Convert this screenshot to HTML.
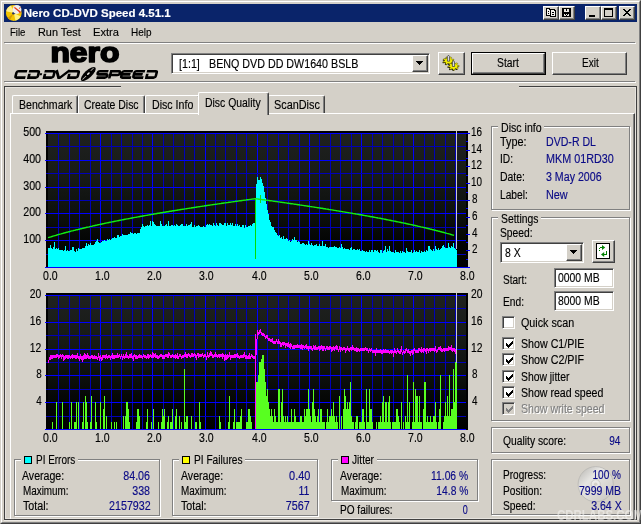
<!DOCTYPE html>
<html><head><meta charset="utf-8"><title>Nero CD-DVD Speed 4.51.1</title>
<style>
html,body{margin:0;padding:0;background:#d4d0c8;}
body{width:641px;height:524px;position:relative;overflow:hidden;font-family:"Liberation Sans",sans-serif;font-size:12px;}
.abs{position:absolute;}
.t{position:absolute;white-space:pre;display:block;-webkit-text-stroke:0.15px currentColor;}
.win{position:absolute;left:0;top:0;width:641px;height:524px;box-sizing:border-box;background:#d4d0c8;
 border-top:1px solid #d4d0c8;border-left:1px solid #d4d0c8;border-right:1px solid #404040;border-bottom:1px solid #404040;}
.win2{position:absolute;left:1px;top:1px;width:637px;height:520px;box-sizing:content-box;border-top:1px solid #fff;border-left:1px solid #fff;border-right:1px solid #808080;border-bottom:1px solid #808080;}
.title{position:absolute;left:4px;top:4px;width:633px;height:18px;background:#0a246a;}
.tbtn{position:absolute;top:6px;width:16px;height:14px;box-sizing:border-box;background:#d4d0c8;border:1px solid;border-color:#fff #404040 #404040 #fff;box-shadow:inset -1px -1px 0 #808080;}
.sep{position:absolute;height:1px;background:#808080;box-shadow:1px 1px 0 #fff;}
.frame{position:absolute;left:4px;top:86px;width:631px;height:432px;border:1px solid #404040;box-shadow:inset 1px 1px 0 #e6e3de, inset -1px -1px 0 #e6e3de, 0 1px 0 #ece9e4;}
.gb{position:absolute;border:1px solid #808080;box-shadow:inset 1px 1px 0 #fff, 1px 1px 0 #fff;}
.sunk{position:absolute;box-sizing:border-box;background:#fff;border:1px solid;border-color:#808080 #fff #fff #808080;box-shadow:inset 1px 1px 0 #404040, inset -1px -1px 0 #d4d0c8;}
.btn{position:absolute;box-sizing:border-box;background:#d4d0c8;border:1px solid;border-color:#fff #404040 #404040 #fff;box-shadow:inset -1px -1px 0 #808080, inset 1px 1px 0 #d4d0c8;}
.cb{position:absolute;width:13px;height:13px;box-sizing:border-box;border:1px solid;border-color:#808080 #fff #fff #808080;box-shadow:inset 1px 1px 0 #404040, inset -1px -1px 0 #d4d0c8;padding:0;}
.cb svg{left:3px !important;top:3px !important;}
.tab{position:absolute;box-sizing:border-box;background:#d4d0c8;border-top:1px solid #fff;border-left:1px solid #fff;border-right:1px solid #404040;border-radius:2px 2px 0 0;box-shadow:inset -1px 0 0 #808080;}
.panel{position:absolute;left:10px;top:113px;width:623px;height:405px;border-top:1px solid #fff;border-left:1px solid #fff;border-right:1px solid #404040;box-shadow:inset -1px 0 0 #808080;box-sizing:content-box;}
.sq{position:absolute;width:6px;height:6px;border:1px solid #000;top:456px;}
</style></head><body>
<div class="win"></div><div class="win2"></div>
<div class="title" id="titlebar"></div>
<!-- app icon -->
<svg class="abs" style="left:4px;top:4px" width="20" height="18" viewBox="0 0 20 18">
<circle cx="9.8" cy="9" r="7.9" fill="#f4c400"/>
<path d="M9.8,9 L2.1,7.2 A7.9,7.9 0 0 1 7,1.600 Z" fill="#fff08c"/>
<path d="M9.8,9 L11.500,16.700 A7.9,7.9 0 0 0 16.800,12.600 Z" fill="#fff27e"/>
<path d="M9.8,9 L3.600,13.900 A7.9,7.9 0 0 0 6,15.900 Z" fill="#d89c00"/>
<circle cx="9.5" cy="9.2" r="1.300" fill="#20306a"/>
<circle cx="12.900" cy="5.4" r="4.500" fill="#f0f0f0"/>
<path d="M10.800,3.800 L16.500,8.300" stroke="#e83818" stroke-width="1.300"/>
<path d="M14.500,6 L16.800,8.600 L15,8.800Z" fill="#e83818"/>
<circle cx="10.300" cy="3.300" r="0.600" fill="#f06030"/>
<circle cx="15.500" cy="4.200" r="0.600" fill="#f06030"/>
<circle cx="16.300" cy="3.200" r="0.500" fill="#f06030"/>
</svg>
<!-- title buttons -->
<div class="tbtn" style="left:543px"></div>
<div class="tbtn" style="left:559px"></div>
<div class="tbtn" style="left:585px"></div>
<div class="tbtn" style="left:601px"></div>
<div class="tbtn" style="left:619px"></div>
<svg class="abs" style="left:543px;top:6px" width="94" height="14" viewBox="543 6 94 14" shape-rendering="crispEdges">
<!-- copy -->
<path d="M546,8h3l2,2v6h-5z" fill="#000"/><path d="M547,9h2v1h1v5h-3z" fill="#f4f2ee"/><rect x="548" y="11" width="1" height="1" fill="#000"/><rect x="548" y="13" width="1" height="1" fill="#000"/>
<path d="M550,9h4l2,2v6h-6z" fill="#000"/><path d="M551,10h3v1h1v5h-4z" fill="#f4f2ee"/><rect x="552" y="12" width="2" height="1" fill="#000"/><rect x="552" y="14" width="2" height="1" fill="#000"/>
<!-- save -->
<rect x="562" y="8" width="9" height="9" fill="#000"/><rect x="564" y="9" width="5" height="3" fill="#e8e6e0"/><rect x="566" y="9" width="1" height="2" fill="#000"/><rect x="564" y="14" width="5" height="2" fill="#e8e6e0"/><rect x="566" y="15" width="1" height="1" fill="#000"/><rect x="565" y="14" width="1" height="1" fill="#000"/><rect x="567" y="14" width="1" height="1" fill="#000"/>
<!-- min -->
<rect x="589" y="15" width="6" height="2" fill="#000"/>
<!-- max -->
<path d="M604,8h9v9h-9zM605,10v6h7v-6z" fill="#000" fill-rule="evenodd"/>
<!-- close -->
<path d="M623,9h2v1h1v1h2v-1h1v-1h2v1h-1v1h-1v1h-1v1h1v1h1v1h1v1h-2v-1h-1v-1h-2v1h-1v1h-2v-1h1v-1h1v-1h1v-1h-1v-1h-1v-1h-1z" fill="#000"/>
</svg>
<!-- separators -->
<div class="sep" style="left:4px;top:42px;width:631px"></div>
<div class="sep" style="left:4px;top:81px;width:631px"></div>
<!-- nero logo -->
<svg class="abs" style="left:10px;top:44px;will-change:transform" width="155" height="40" viewBox="10 44 155 40">
<text x="50.4" y="62.3" font-family="Liberation Sans, sans-serif" font-weight="bold" font-size="28" textLength="69" lengthAdjust="spacingAndGlyphs" fill="#000" stroke="#000" stroke-width="1.7" stroke-linejoin="round">nero</text>
<g transform="translate(0,78.6) skewX(-15)">
<path d="M25.10,-7.4H16.50Q14.90,-7.4 14.90,-5.800000000000001V-2.6Q14.90,-1.0 16.50,-1.0H25.10M27.00,-7.4H35.60Q37.20,-7.4 37.20,-5.800000000000001V-2.6Q37.20,-1.0 35.60,-1.0H27.00M28.20,-4.8V-1.0M42.60,-7.4H51.20Q52.80,-7.4 52.80,-5.800000000000001V-2.6Q52.80,-1.0 51.20,-1.0H42.60M43.80,-4.8V-1.0M54.30,-8.4L58.30,-1.0H59.70L67.50,-8.4M66.90,-7.4H75.50Q77.10,-7.4 77.10,-5.800000000000001V-2.6Q77.10,-1.0 75.50,-1.0H66.90M68.10,-4.8V-1.0M106.40,-7.4H97.80Q96.20,-7.4 96.20,-5.80Q96.20,-4.2 97.80,-4.2H104.80Q106.40,-4.2 106.40,-2.60Q106.40,-1.0 104.80,-1.0H96.20M109.20,0.0V-7.4H116.80Q118.40,-7.4 118.40,-5.50Q118.40,-3.6 116.80,-3.6H109.20M130.80,-7.4H122.20Q120.60,-7.4 120.60,-5.800000000000001V-2.6Q120.60,-1.0 122.20,-1.0H130.80M120.60,-4.2H129.30M143.00,-7.4H134.40Q132.80,-7.4 132.80,-5.800000000000001V-2.6Q132.80,-1.0 134.40,-1.0H143.00M132.80,-4.2H141.50M144.90,-7.4H153.50Q155.10,-7.4 155.10,-5.800000000000001V-2.6Q155.10,-1.0 153.50,-1.0H144.90M146.10,-4.8V-1.0" fill="none" stroke="#000" stroke-width="2.6" stroke-linejoin="miter"/>
<rect x="38.6" y="-5.3" width="2.2" height="2" fill="#000"/>
</g>
<g transform="translate(88.3,74) rotate(-43)">
<ellipse cx="0" cy="0" rx="9.6" ry="3.7" fill="#000"/>
<rect x="-8" y="-0.35" width="5" height="0.7" fill="#d4d0c8"/>
<rect x="4" y="-1.1" width="4" height="0.7" fill="#d4d0c8"/>
<ellipse cx="0.3" cy="-0.2" rx="1.7" ry="0.8" fill="#f0eee8"/>
</g>
</svg>
<!-- toolbar -->
<div class="sunk" style="left:171px;top:53px;width:259px;height:21px"></div>
<div class="btn" style="left:412px;top:55px;width:16px;height:17px"><svg width="7" height="4" viewBox="0 0 7 4" shape-rendering="crispEdges" style="position:absolute;left:3px;top:5px"><path d="M0,0h7l-3.5,4z" fill="#000"/></svg></div>
<div class="btn" style="left:438px;top:52px;width:27px;height:23px"></div>
<div class="abs" style="left:471px;top:52px;width:75px;height:23px;background:#000"></div>
<div class="btn" style="left:472px;top:53px;width:73px;height:21px"></div>
<div class="btn" style="left:552px;top:52px;width:75px;height:23px"></div>
<!-- gear icon -->
<svg class="abs" style="left:438px;top:52px" width="27" height="23" viewBox="438 52 27 23">
<path d="M452.32,61.36L453.78,62.15L453.14,63.05L451.40,62.68L450.65,63.14L450.91,64.44L449.57,64.76L448.70,63.60L447.73,63.55L446.63,64.60L445.37,64.14L445.89,62.88L445.25,62.35L443.44,62.53L443.00,61.57L444.61,60.94L444.68,60.24L443.22,59.45L443.86,58.55L445.60,58.92L446.35,58.46L446.09,57.16L447.43,56.84L448.30,58.00L449.27,58.05L450.37,57.00L451.63,57.46L451.11,58.72L451.75,59.25L453.56,59.07L454.00,60.03L452.39,60.66Z" fill="#000" transform="translate(-0.6,0.7)"/>
<path d="M452.32,61.36L453.78,62.15L453.14,63.05L451.40,62.68L450.65,63.14L450.91,64.44L449.57,64.76L448.70,63.60L447.73,63.55L446.63,64.60L445.37,64.14L445.89,62.88L445.25,62.35L443.44,62.53L443.00,61.57L444.61,60.94L444.68,60.24L443.22,59.45L443.86,58.55L445.60,58.92L446.35,58.46L446.09,57.16L447.43,56.84L448.30,58.00L449.27,58.05L450.37,57.00L451.63,57.46L451.11,58.72L451.75,59.25L453.56,59.07L454.00,60.03L452.39,60.66Z" fill="#f4f000" stroke="#5a5400" stroke-width="0.5"/>
<path d="M457.11,67.42L458.25,68.45L457.33,69.21L455.76,68.54L454.88,68.85L454.68,70.16L453.28,70.23L452.83,68.95L451.90,68.73L450.48,69.55L449.42,68.88L450.35,67.75L449.92,67.12L448.11,66.98L448.01,65.97L449.78,65.65L450.09,64.98L448.95,63.95L449.87,63.19L451.44,63.86L452.32,63.55L452.52,62.24L453.92,62.17L454.37,63.45L455.30,63.67L456.72,62.85L457.78,63.52L456.85,64.65L457.28,65.28L459.09,65.42L459.19,66.43L457.42,66.75Z" fill="#000" transform="translate(-0.6,0.7)"/>
<path d="M457.11,67.42L458.25,68.45L457.33,69.21L455.76,68.54L454.88,68.85L454.68,70.16L453.28,70.23L452.83,68.95L451.90,68.73L450.48,69.55L449.42,68.88L450.35,67.75L449.92,67.12L448.11,66.98L448.01,65.97L449.78,65.65L450.09,64.98L448.95,63.95L449.87,63.19L451.44,63.86L452.32,63.55L452.52,62.24L453.92,62.17L454.37,63.45L455.30,63.67L456.72,62.85L457.78,63.52L456.85,64.65L457.28,65.28L459.09,65.42L459.19,66.43L457.42,66.75Z" fill="#f4f000" stroke="#5a5400" stroke-width="0.5"/>
<path d="M447.4,61.2V56.600L448.500,55.2L449.600,56.600V61.2Z" fill="#d8d8e4" stroke="#303030" stroke-width="0.7"/>
<path d="M452.400,66.500V62L453.500,60.600L454.600,62V66.500Z" fill="#d8d8e4" stroke="#303030" stroke-width="0.7"/>
</svg>
<!-- outer frame & tabs -->
<div class="frame"></div>
<div class="abs" style="left:121px;top:86px;width:398px;height:2px;background:#d4d0c8"></div>
<div class="tab" style="left:12px;top:95px;width:66px;height:19px"></div>
<div class="tab" style="left:78px;top:95px;width:67px;height:19px"></div>
<div class="tab" style="left:145px;top:95px;width:55px;height:19px"></div>
<div class="tab" style="left:268px;top:95px;width:57px;height:19px"></div>
<div class="panel"></div>
<div class="tab" style="left:198px;top:92px;width:71px;height:23px"></div>
<!-- charts -->
<svg class="abs" style="left:0;top:0" width="641" height="524" viewBox="0 0 641 524" shape-rendering="crispEdges">
<defs>
<linearGradient id="cg" x1="0" y1="0" x2="0" y2="1"><stop offset="0" stop-color="#1f211f"/><stop offset="0.3" stop-color="#181b18"/><stop offset="0.6" stop-color="#0d100d"/><stop offset="0.85" stop-color="#020302"/><stop offset="1" stop-color="#000"/></linearGradient>
</defs>
<rect x="46" y="131" width="422" height="137" fill="#000"/>
<rect x="48" y="133" width="418" height="134" fill="url(#cg)"/>
<rect x="46" y="293" width="422" height="137" fill="#000"/>
<rect x="48" y="295" width="418" height="134" fill="url(#cg)"/>
<rect x="58" y="133" width="1" height="135" fill="#0000b8"/>
<rect x="69" y="133" width="1" height="135" fill="#0000b8"/>
<rect x="79" y="133" width="1" height="135" fill="#0000b8"/>
<rect x="90" y="133" width="1" height="135" fill="#0000b8"/>
<rect x="100" y="133" width="1" height="135" fill="#0000ff"/>
<rect x="111" y="133" width="1" height="135" fill="#0000b8"/>
<rect x="121" y="133" width="1" height="135" fill="#0000b8"/>
<rect x="132" y="133" width="1" height="135" fill="#0000b8"/>
<rect x="142" y="133" width="1" height="135" fill="#0000b8"/>
<rect x="152" y="133" width="1" height="135" fill="#0000ff"/>
<rect x="163" y="133" width="1" height="135" fill="#0000b8"/>
<rect x="173" y="133" width="1" height="135" fill="#0000b8"/>
<rect x="184" y="133" width="1" height="135" fill="#0000b8"/>
<rect x="194" y="133" width="1" height="135" fill="#0000b8"/>
<rect x="205" y="133" width="1" height="135" fill="#0000ff"/>
<rect x="215" y="133" width="1" height="135" fill="#0000b8"/>
<rect x="225" y="133" width="1" height="135" fill="#0000b8"/>
<rect x="236" y="133" width="1" height="135" fill="#0000b8"/>
<rect x="246" y="133" width="1" height="135" fill="#0000b8"/>
<rect x="257" y="133" width="1" height="135" fill="#0000ff"/>
<rect x="267" y="133" width="1" height="135" fill="#0000b8"/>
<rect x="278" y="133" width="1" height="135" fill="#0000b8"/>
<rect x="288" y="133" width="1" height="135" fill="#0000b8"/>
<rect x="299" y="133" width="1" height="135" fill="#0000b8"/>
<rect x="309" y="133" width="1" height="135" fill="#0000ff"/>
<rect x="319" y="133" width="1" height="135" fill="#0000b8"/>
<rect x="330" y="133" width="1" height="135" fill="#0000b8"/>
<rect x="340" y="133" width="1" height="135" fill="#0000b8"/>
<rect x="351" y="133" width="1" height="135" fill="#0000b8"/>
<rect x="361" y="133" width="1" height="135" fill="#0000ff"/>
<rect x="372" y="133" width="1" height="135" fill="#0000b8"/>
<rect x="382" y="133" width="1" height="135" fill="#0000b8"/>
<rect x="393" y="133" width="1" height="135" fill="#0000b8"/>
<rect x="403" y="133" width="1" height="135" fill="#0000b8"/>
<rect x="413" y="133" width="1" height="135" fill="#0000ff"/>
<rect x="424" y="133" width="1" height="135" fill="#0000b8"/>
<rect x="434" y="133" width="1" height="135" fill="#0000b8"/>
<rect x="445" y="133" width="1" height="135" fill="#0000b8"/>
<rect x="455" y="133" width="1" height="135" fill="#0000b8"/>
<rect x="45" y="133" width="421" height="1" fill="#0000ff"/>
<rect x="46" y="146" width="420" height="1" fill="#0000b8"/>
<rect x="45" y="160" width="421" height="1" fill="#0000ff"/>
<rect x="46" y="173" width="420" height="1" fill="#0000b8"/>
<rect x="45" y="187" width="421" height="1" fill="#0000ff"/>
<rect x="46" y="200" width="420" height="1" fill="#0000b8"/>
<rect x="45" y="213" width="421" height="1" fill="#0000ff"/>
<rect x="46" y="227" width="420" height="1" fill="#0000b8"/>
<rect x="45" y="240" width="421" height="1" fill="#0000ff"/>
<rect x="46" y="254" width="420" height="1" fill="#0000b8"/>
<rect x="45" y="267" width="421" height="1" fill="#0000ff"/>
<rect x="58" y="295" width="1" height="135" fill="#0000b8"/>
<rect x="69" y="295" width="1" height="135" fill="#0000b8"/>
<rect x="79" y="295" width="1" height="135" fill="#0000b8"/>
<rect x="90" y="295" width="1" height="135" fill="#0000b8"/>
<rect x="100" y="295" width="1" height="135" fill="#0000ff"/>
<rect x="111" y="295" width="1" height="135" fill="#0000b8"/>
<rect x="121" y="295" width="1" height="135" fill="#0000b8"/>
<rect x="132" y="295" width="1" height="135" fill="#0000b8"/>
<rect x="142" y="295" width="1" height="135" fill="#0000b8"/>
<rect x="152" y="295" width="1" height="135" fill="#0000ff"/>
<rect x="163" y="295" width="1" height="135" fill="#0000b8"/>
<rect x="173" y="295" width="1" height="135" fill="#0000b8"/>
<rect x="184" y="295" width="1" height="135" fill="#0000b8"/>
<rect x="194" y="295" width="1" height="135" fill="#0000b8"/>
<rect x="205" y="295" width="1" height="135" fill="#0000ff"/>
<rect x="215" y="295" width="1" height="135" fill="#0000b8"/>
<rect x="225" y="295" width="1" height="135" fill="#0000b8"/>
<rect x="236" y="295" width="1" height="135" fill="#0000b8"/>
<rect x="246" y="295" width="1" height="135" fill="#0000b8"/>
<rect x="257" y="295" width="1" height="135" fill="#0000ff"/>
<rect x="267" y="295" width="1" height="135" fill="#0000b8"/>
<rect x="278" y="295" width="1" height="135" fill="#0000b8"/>
<rect x="288" y="295" width="1" height="135" fill="#0000b8"/>
<rect x="299" y="295" width="1" height="135" fill="#0000b8"/>
<rect x="309" y="295" width="1" height="135" fill="#0000ff"/>
<rect x="319" y="295" width="1" height="135" fill="#0000b8"/>
<rect x="330" y="295" width="1" height="135" fill="#0000b8"/>
<rect x="340" y="295" width="1" height="135" fill="#0000b8"/>
<rect x="351" y="295" width="1" height="135" fill="#0000b8"/>
<rect x="361" y="295" width="1" height="135" fill="#0000ff"/>
<rect x="372" y="295" width="1" height="135" fill="#0000b8"/>
<rect x="382" y="295" width="1" height="135" fill="#0000b8"/>
<rect x="393" y="295" width="1" height="135" fill="#0000b8"/>
<rect x="403" y="295" width="1" height="135" fill="#0000b8"/>
<rect x="413" y="295" width="1" height="135" fill="#0000ff"/>
<rect x="424" y="295" width="1" height="135" fill="#0000b8"/>
<rect x="434" y="295" width="1" height="135" fill="#0000b8"/>
<rect x="445" y="295" width="1" height="135" fill="#0000b8"/>
<rect x="455" y="295" width="1" height="135" fill="#0000b8"/>
<rect x="45" y="295" width="421" height="1" fill="#0000ff"/>
<rect x="46" y="308" width="420" height="1" fill="#0000b8"/>
<rect x="45" y="322" width="421" height="1" fill="#0000ff"/>
<rect x="46" y="335" width="420" height="1" fill="#0000b8"/>
<rect x="45" y="349" width="421" height="1" fill="#0000ff"/>
<rect x="46" y="362" width="420" height="1" fill="#0000b8"/>
<rect x="45" y="375" width="421" height="1" fill="#0000ff"/>
<rect x="46" y="389" width="420" height="1" fill="#0000b8"/>
<rect x="45" y="402" width="421" height="1" fill="#0000ff"/>
<rect x="46" y="416" width="420" height="1" fill="#0000b8"/>
<rect x="45" y="429" width="421" height="1" fill="#0000ff"/>
<rect x="466" y="133" width="4" height="1" fill="#0000ff"/>
<rect x="466" y="141" width="2" height="1" fill="#0000ff"/>
<rect x="466" y="150" width="4" height="1" fill="#0000ff"/>
<rect x="466" y="158" width="2" height="1" fill="#0000ff"/>
<rect x="466" y="166" width="4" height="1" fill="#0000ff"/>
<rect x="466" y="175" width="2" height="1" fill="#0000ff"/>
<rect x="466" y="183" width="4" height="1" fill="#0000ff"/>
<rect x="466" y="192" width="2" height="1" fill="#0000ff"/>
<rect x="466" y="200" width="4" height="1" fill="#0000ff"/>
<rect x="466" y="208" width="2" height="1" fill="#0000ff"/>
<rect x="466" y="217" width="4" height="1" fill="#0000ff"/>
<rect x="466" y="225" width="2" height="1" fill="#0000ff"/>
<rect x="466" y="234" width="4" height="1" fill="#0000ff"/>
<rect x="466" y="242" width="2" height="1" fill="#0000ff"/>
<rect x="466" y="250" width="4" height="1" fill="#0000ff"/>
<rect x="466" y="259" width="2" height="1" fill="#0000ff"/>
<rect x="466" y="267" width="4" height="1" fill="#0000ff"/>
<path d="M48,267.0L48,248.1L49,248.1L49,247.6L50,247.6L50,244.8L51,244.8L51,248.3L52,248.3L52,249.4L53,249.4L53,247.2L54,247.2L54,242.4L55,242.4L55,249.2L56,249.2L56,248.1L57,248.1L57,249.3L58,249.3L58,247.9L59,247.9L59,250.2L60,250.2L60,250.2L61,250.2L61,249.9L62,249.9L62,250.2L63,250.2L63,250.8L64,250.8L64,249.9L65,249.9L65,246.1L66,246.1L66,250.6L67,250.6L67,249.7L68,249.7L68,250.7L69,250.7L69,251.3L70,251.3L70,249.6L71,249.6L71,250.3L72,250.3L72,247.1L73,247.1L73,246.6L74,246.6L74,250.8L75,250.8L75,251.8L76,251.8L76,249.3L77,249.3L77,250.9L78,250.9L78,248.2L79,248.2L79,249.2L80,249.2L80,248.6L81,248.6L81,248.5L82,248.5L82,247.7L83,247.7L83,247.9L84,247.9L84,247.8L85,247.8L85,245.9L86,245.9L86,242.8L87,242.8L87,245.9L88,245.9L88,244.1L89,244.1L89,245.3L90,245.3L90,243.1L91,243.1L91,244.6L92,244.6L92,244.7L93,244.7L93,245.0L94,245.0L94,243.8L95,243.8L95,242.4L96,242.4L96,241.1L97,241.1L97,239.4L98,239.4L98,242.4L99,242.4L99,242.7L100,242.7L100,242.8L101,242.8L101,242.3L102,242.3L102,241.2L103,241.2L103,241.2L104,241.2L104,239.8L105,239.8L105,240.8L106,240.8L106,241.1L107,241.1L107,238.9L108,238.9L108,239.7L109,239.7L109,238.7L110,238.7L110,239.5L111,239.5L111,239.4L112,239.4L112,238.1L113,238.1L113,238.4L114,238.4L114,236.6L115,236.6L115,237.6L116,237.6L116,237.8L117,237.8L117,234.9L118,234.9L118,235.1L119,235.1L119,236.7L120,236.7L120,235.9L121,235.9L121,236.0L122,236.0L122,234.2L123,234.2L123,235.3L124,235.3L124,234.7L125,234.7L125,235.2L126,235.2L126,234.7L127,234.7L127,235.3L128,235.3L128,234.4L129,234.4L129,233.7L130,233.7L130,232.4L131,232.4L131,233.2L132,233.2L132,233.4L133,233.4L133,234.2L134,234.2L134,233.3L135,233.3L135,233.1L136,233.1L136,233.7L137,233.7L137,232.9L138,232.9L138,232.6L139,232.6L139,232.6L140,232.6L140,228.9L141,228.9L141,227.0L142,227.0L142,224.4L143,224.4L143,225.8L144,225.8L144,227.1L145,227.1L145,226.4L146,226.4L146,226.4L147,226.4L147,224.9L148,224.9L148,225.8L149,225.8L149,225.4L150,225.4L150,221.0L151,221.0L151,225.6L152,225.6L152,220.6L153,220.6L153,221.5L154,221.5L154,224.1L155,224.1L155,225.3L156,225.3L156,226.4L157,226.4L157,226.2L158,226.2L158,225.7L159,225.7L159,226.2L160,226.2L160,220.7L161,220.7L161,224.1L162,224.1L162,225.5L163,225.5L163,225.7L164,225.7L164,225.6L165,225.6L165,225.2L166,225.2L166,224.4L167,224.4L167,225.6L168,225.6L168,220.8L169,220.8L169,225.5L170,225.5L170,225.9L171,225.9L171,225.0L172,225.0L172,225.0L173,225.0L173,226.1L174,226.1L174,225.2L175,225.2L175,225.5L176,225.5L176,224.2L177,224.2L177,225.4L178,225.4L178,225.6L179,225.6L179,225.6L180,225.6L180,225.3L181,225.3L181,224.4L182,224.4L182,223.6L183,223.6L183,226.0L184,226.0L184,225.9L185,225.9L185,226.4L186,226.4L186,224.1L187,224.1L187,226.1L188,226.1L188,225.4L189,225.4L189,225.1L190,225.1L190,223.9L191,223.9L191,221.8L192,221.8L192,226.5L193,226.5L193,227.0L194,227.0L194,225.2L195,225.2L195,226.6L196,226.6L196,226.1L197,226.1L197,226.1L198,226.1L198,224.8L199,224.8L199,226.4L200,226.4L200,226.8L201,226.8L201,226.8L202,226.8L202,226.9L203,226.9L203,226.2L204,226.2L204,226.7L205,226.7L205,226.7L206,226.7L206,225.4L207,225.4L207,223.6L208,223.6L208,224.7L209,224.7L209,223.6L210,223.6L210,225.2L211,225.2L211,225.1L212,225.1L212,225.6L213,225.6L213,222.8L214,222.8L214,224.6L215,224.6L215,225.7L216,225.7L216,222.8L217,222.8L217,225.2L218,225.2L218,225.6L219,225.6L219,223.2L220,223.2L220,222.7L221,222.7L221,224.3L222,224.3L222,224.9L223,224.9L223,224.8L224,224.8L224,223.4L225,223.4L225,222.7L226,222.7L226,225.7L227,225.7L227,222.7L228,222.7L228,225.0L229,225.0L229,224.9L230,224.9L230,223.2L231,223.2L231,224.9L232,224.9L232,223.3L233,223.3L233,225.5L234,225.5L234,225.9L235,225.9L235,224.3L236,224.3L236,225.7L237,225.7L237,223.7L238,223.7L238,226.3L239,226.3L239,224.6L240,224.6L240,227.0L241,227.0L241,226.9L242,226.9L242,225.0L243,225.0L243,225.2L244,225.2L244,227.6L245,227.6L245,224.9L246,224.9L246,226.6L247,226.6L247,227.1L248,227.1L248,226.4L249,226.4L249,225.5L250,225.5L250,224.9L251,224.9L251,225.7L252,225.7L252,224.3L253,224.3L253,223.4L254,223.4L254,222.7L255,222.7L255,222.6L256,222.6L256,183.8L257,183.8L257,177.2L258,177.2L258,179.8L259,179.8L259,179.5L260,179.5L260,177.0L261,177.0L261,178.5L262,178.5L262,182.5L263,182.5L263,186.2L264,186.2L264,191.8L265,191.8L265,197.9L266,197.9L266,204.1L267,204.1L267,210.2L268,210.2L268,214.2L269,214.2L269,220.2L270,220.2L270,221.9L271,221.9L271,225.5L272,225.5L272,227.2L273,227.2L273,227.1L274,227.1L274,229.6L275,229.6L275,231.9L276,231.9L276,233.0L277,233.0L277,234.9L278,234.9L278,235.5L279,235.5L279,234.9L280,234.9L280,238.4L281,238.4L281,237.2L282,237.2L282,239.2L283,239.2L283,236.3L284,236.3L284,238.6L285,238.6L285,238.7L286,238.7L286,237.9L287,237.9L287,239.3L288,239.3L288,240.6L289,240.6L289,240.4L290,240.4L290,241.9L291,241.9L291,241.1L292,241.1L292,238.9L293,238.9L293,240.0L294,240.0L294,237.4L295,237.4L295,240.3L296,240.3L296,240.3L297,240.3L297,241.6L298,241.6L298,240.9L299,240.9L299,242.4L300,242.4L300,243.6L301,243.6L301,243.9L302,243.9L302,243.4L303,243.4L303,242.6L304,242.6L304,243.8L305,243.8L305,245.0L306,245.0L306,243.5L307,243.5L307,244.8L308,244.8L308,241.3L309,241.3L309,243.6L310,243.6L310,245.1L311,245.1L311,243.3L312,243.3L312,244.8L313,244.8L313,245.5L314,245.5L314,244.9L315,244.9L315,244.5L316,244.5L316,243.9L317,243.9L317,245.9L318,245.9L318,245.7L319,245.7L319,244.0L320,244.0L320,246.0L321,246.0L321,246.4L322,246.4L322,241.1L323,241.1L323,245.5L324,245.5L324,246.0L325,246.0L325,244.0L326,244.0L326,247.2L327,247.2L327,246.8L328,246.8L328,247.5L329,247.5L329,247.2L330,247.2L330,246.6L331,246.6L331,246.6L332,246.6L332,246.5L333,246.5L333,246.8L334,246.8L334,245.5L335,245.5L335,246.9L336,246.9L336,247.0L337,247.0L337,247.5L338,247.5L338,248.2L339,248.2L339,247.4L340,247.4L340,248.4L341,248.4L341,243.7L342,243.7L342,246.8L343,246.8L343,248.7L344,248.7L344,247.6L345,247.6L345,249.4L346,249.4L346,248.6L347,248.6L347,248.6L348,248.6L348,248.6L349,248.6L349,250.2L350,250.2L350,248.1L351,248.1L351,247.4L352,247.4L352,250.0L353,250.0L353,248.5L354,248.5L354,248.6L355,248.6L355,249.9L356,249.9L356,250.3L357,250.3L357,249.3L358,249.3L358,249.6L359,249.6L359,248.7L360,248.7L360,250.6L361,250.6L361,250.5L362,250.5L362,250.2L363,250.2L363,251.1L364,251.1L364,251.2L365,251.2L365,251.5L366,251.5L366,251.4L367,251.4L367,251.5L368,251.5L368,251.7L369,251.7L369,250.2L370,250.2L370,251.9L371,251.9L371,249.6L372,249.6L372,249.9L373,249.9L373,252.3L374,252.3L374,249.7L375,249.7L375,250.3L376,250.3L376,251.3L377,251.3L377,249.7L378,249.7L378,252.4L379,252.4L379,252.5L380,252.5L380,249.8L381,249.8L381,249.5L382,249.5L382,252.6L383,252.6L383,251.2L384,251.2L384,250.2L385,250.2L385,245.5L386,245.5L386,252.1L387,252.1L387,249.4L388,249.4L388,250.9L389,250.9L389,246.3L390,246.3L390,251.2L391,251.2L391,251.6L392,251.6L392,251.6L393,251.6L393,252.2L394,252.2L394,252.8L395,252.8L395,249.7L396,249.7L396,251.7L397,251.7L397,251.9L398,251.9L398,252.2L399,252.2L399,252.9L400,252.9L400,251.2L401,251.2L401,252.6L402,252.6L402,251.0L403,251.0L403,251.5L404,251.5L404,251.9L405,251.9L405,252.9L406,252.9L406,248.0L407,248.0L407,251.3L408,251.3L408,251.9L409,251.9L409,251.7L410,251.7L410,251.9L411,251.9L411,250.0L412,250.0L412,252.6L413,252.6L413,252.4L414,252.4L414,249.9L415,249.9L415,251.7L416,251.7L416,251.1L417,251.1L417,251.6L418,251.6L418,252.4L419,252.4L419,250.3L420,250.3L420,252.8L421,252.8L421,250.8L422,250.8L422,252.3L423,252.3L423,251.6L424,251.6L424,251.1L425,251.1L425,252.0L426,252.0L426,250.1L427,250.1L427,251.1L428,251.1L428,245.5L429,245.5L429,245.8L430,245.8L430,249.0L431,249.0L431,250.3L432,250.3L432,250.9L433,250.9L433,248.9L434,248.9L434,250.8L435,250.8L435,246.3L436,246.3L436,249.4L437,249.4L437,249.6L438,249.6L438,247.9L439,247.9L439,249.8L440,249.8L440,249.3L441,249.3L441,247.9L442,247.9L442,246.3L443,246.3L443,245.4L444,245.4L444,246.9L445,246.9L445,247.7L446,247.7L446,248.4L447,248.4L447,247.6L448,247.6L448,242.9L449,242.9L449,247.0L450,247.0L450,248.2L451,248.2L451,246.0L452,246.0L452,247.3L453,247.3L453,243.2L454,243.2L454,247.8L455,247.8L455,248.5L456,248.5L456,249.9L457,249.9L457,267.0Z" fill="#00ffff"/>
<rect x="255" y="199" width="1" height="60" fill="#00e000"/>
<polyline points="48,237.7 49,237.4 50,237.1 51,236.8 52,236.5 53,236.2 54,235.9 55,235.6 56,235.3 57,235.0 58,234.7 59,234.4 60,234.1 61,233.9 62,233.6 63,233.3 64,233.0 65,232.8 66,232.5 67,232.2 68,232.0 69,231.7 70,231.5 71,231.2 72,230.9 73,230.7 74,230.4 75,230.2 76,229.9 77,229.7 78,229.5 79,229.2 80,229.0 81,228.7 82,228.5 83,228.2 84,228.0 85,227.8 86,227.5 87,227.3 88,227.1 89,226.9 90,226.6 91,226.4 92,226.2 93,225.9 94,225.7 95,225.5 96,225.3 97,225.1 98,224.8 99,224.6 100,224.4 101,224.2 102,224.0 103,223.8 104,223.6 105,223.3 106,223.1 107,222.9 108,222.7 109,222.5 110,222.3 111,222.1 112,221.9 113,221.7 114,221.5 115,221.3 116,221.1 117,220.9 118,220.7 119,220.5 120,220.3 121,220.1 122,219.9 123,219.7 124,219.5 125,219.3 126,219.1 127,218.9 128,218.8 129,218.6 130,218.4 131,218.2 132,218.0 133,217.8 134,217.6 135,217.4 136,217.3 137,217.1 138,216.9 139,216.7 140,216.5 141,216.3 142,216.2 143,216.0 144,215.8 145,215.6 146,215.4 147,215.3 148,215.1 149,214.9 150,214.7 151,214.6 152,214.4 153,214.2 154,214.0 155,213.9 156,213.7 157,213.5 158,213.3 159,213.2 160,213.0 161,212.8 162,212.7 163,212.5 164,212.3 165,212.2 166,212.0 167,211.8 168,211.7 169,211.5 170,211.3 171,211.2 172,211.0 173,210.8 174,210.7 175,210.5 176,210.4 177,210.2 178,210.0 179,209.9 180,209.7 181,209.5 182,209.4 183,209.2 184,209.1 185,208.9 186,208.8 187,208.6 188,208.4 189,208.3 190,208.1 191,208.0 192,207.8 193,207.7 194,207.5 195,207.4 196,207.2 197,207.0 198,206.9 199,206.7 200,206.6 201,206.4 202,206.3 203,206.1 204,206.0 205,205.8 206,205.7 207,205.5 208,205.4 209,205.2 210,205.1 211,204.9 212,204.8 213,204.6 214,204.5 215,204.4 216,204.2 217,204.1 218,203.9 219,203.8 220,203.6 221,203.5 222,203.3 223,203.2 224,203.0 225,202.9 226,202.8 227,202.6 228,202.5 229,202.3 230,202.2 231,202.1 232,201.9 233,201.8 234,201.6 235,201.5 236,201.3 237,201.2 238,201.1 239,200.9 240,200.8 241,200.7 242,200.5 243,200.4 244,200.2 245,200.1 246,200.0 247,199.8 248,199.7 249,199.6 250,199.4 251,199.3 252,199.1 253,199.0 254,198.9 255,198.7 256,198.7 257,198.9 258,199.0 259,199.2 260,199.3 261,199.4 262,199.6 263,199.7 264,199.8 265,200.0 266,200.1 267,200.2 268,200.4 269,200.5 270,200.7 271,200.8 272,200.9 273,201.1 274,201.2 275,201.4 276,201.5 277,201.6 278,201.8 279,201.9 280,202.1 281,202.2 282,202.4 283,202.5 284,202.6 285,202.8 286,202.9 287,203.1 288,203.2 289,203.4 290,203.5 291,203.7 292,203.8 293,203.9 294,204.1 295,204.2 296,204.4 297,204.5 298,204.7 299,204.8 300,205.0 301,205.1 302,205.3 303,205.4 304,205.6 305,205.7 306,205.9 307,206.0 308,206.2 309,206.3 310,206.5 311,206.6 312,206.8 313,206.9 314,207.1 315,207.3 316,207.4 317,207.6 318,207.7 319,207.9 320,208.0 321,208.2 322,208.3 323,208.5 324,208.7 325,208.8 326,209.0 327,209.1 328,209.3 329,209.5 330,209.6 331,209.8 332,209.9 333,210.1 334,210.3 335,210.4 336,210.6 337,210.8 338,210.9 339,211.1 340,211.3 341,211.4 342,211.6 343,211.8 344,211.9 345,212.1 346,212.3 347,212.4 348,212.6 349,212.8 350,212.9 351,213.1 352,213.3 353,213.5 354,213.6 355,213.8 356,214.0 357,214.1 358,214.3 359,214.5 360,214.7 361,214.8 362,215.0 363,215.2 364,215.4 365,215.6 366,215.7 367,215.9 368,216.1 369,216.3 370,216.5 371,216.7 372,216.8 373,217.0 374,217.2 375,217.4 376,217.6 377,217.8 378,218.0 379,218.1 380,218.3 381,218.5 382,218.7 383,218.9 384,219.1 385,219.3 386,219.5 387,219.7 388,219.9 389,220.1 390,220.3 391,220.5 392,220.7 393,220.9 394,221.1 395,221.3 396,221.5 397,221.7 398,221.9 399,222.1 400,222.3 401,222.5 402,222.7 403,222.9 404,223.1 405,223.3 406,223.5 407,223.8 408,224.0 409,224.2 410,224.4 411,224.6 412,224.8 413,225.1 414,225.3 415,225.5 416,225.7 417,225.9 418,226.2 419,226.4 420,226.6 421,226.9 422,227.1 423,227.3 424,227.6 425,227.8 426,228.0 427,228.3 428,228.5 429,228.7 430,229.0 431,229.2 432,229.5 433,229.7 434,230.0 435,230.2 436,230.5 437,230.7 438,231.0 439,231.2 440,231.5 441,231.8 442,232.0 443,232.3 444,232.5 445,232.8 446,233.1 447,233.4 448,233.6 449,233.9 450,234.2 451,234.5 452,234.8 453,235.1 454,235.3" fill="none" stroke="#12ee12" stroke-width="1.4" shape-rendering="geometricPrecision"/>
<rect x="260" y="195" width="1" height="8" fill="#18d818"/>
<rect x="456" y="131" width="1" height="118" fill="#c8c8c8"/>
<path d="M52,429.0V422.3h1V429.0zM56,429.0V402.2h1V429.0zM62,429.0V402.2h1V429.0zM69,429.0V422.3h1V429.0zM71,429.0V402.2h1V429.0zM74,429.0V422.3h1V429.0zM75,429.0V422.3h1V429.0zM76,429.0V402.2h1V429.0zM78,429.0V402.2h1V429.0zM82,429.0V422.3h1V429.0zM83,429.0V402.2h1V429.0zM85,429.0V395.5h1V429.0zM86,429.0V402.2h1V429.0zM87,429.0V422.3h1V429.0zM90,429.0V422.3h1V429.0zM91,429.0V395.5h1V429.0zM95,429.0V402.2h1V429.0zM96,429.0V422.3h1V429.0zM100,429.0V402.2h1V429.0zM103,429.0V408.9h1V429.0zM104,429.0V395.5h1V429.0zM106,429.0V415.6h1V429.0zM111,429.0V422.3h1V429.0zM114,429.0V422.3h1V429.0zM116,429.0V422.3h1V429.0zM123,429.0V415.6h1V429.0zM125,429.0V415.6h1V429.0zM126,429.0V402.2h1V429.0zM127,429.0V402.2h1V429.0zM128,429.0V408.9h1V429.0zM129,429.0V422.3h1V429.0zM136,429.0V422.3h1V429.0zM137,429.0V408.9h1V429.0zM138,429.0V408.9h1V429.0zM139,429.0V415.6h1V429.0zM146,429.0V422.3h1V429.0zM147,429.0V408.9h1V429.0zM151,429.0V422.3h1V429.0zM153,429.0V408.9h1V429.0zM158,429.0V422.3h1V429.0zM161,429.0V422.3h1V429.0zM162,429.0V408.9h1V429.0zM163,429.0V415.6h1V429.0zM164,429.0V408.9h1V429.0zM167,429.0V422.3h1V429.0zM168,429.0V415.6h1V429.0zM170,429.0V422.3h1V429.0zM171,429.0V422.3h1V429.0zM172,429.0V408.9h1V429.0zM175,429.0V415.6h1V429.0zM176,429.0V408.9h1V429.0zM179,429.0V415.6h1V429.0zM181,429.0V422.3h1V429.0zM184,429.0V368.7h1V429.0zM185,429.0V422.3h1V429.0zM186,429.0V415.6h1V429.0zM187,429.0V415.6h1V429.0zM191,429.0V415.6h1V429.0zM195,429.0V422.3h1V429.0zM196,429.0V422.3h1V429.0zM199,429.0V402.2h1V429.0zM200,429.0V422.3h1V429.0zM219,429.0V415.6h1V429.0zM220,429.0V422.3h1V429.0zM228,429.0V422.3h1V429.0zM229,429.0V395.5h1V429.0zM233,429.0V422.3h1V429.0zM234,429.0V408.9h1V429.0zM236,429.0V422.3h1V429.0zM237,429.0V422.3h1V429.0zM238,429.0V422.3h1V429.0zM239,429.0V422.3h1V429.0zM240,429.0V415.6h1V429.0zM241,429.0V408.9h1V429.0zM246,429.0V422.3h1V429.0zM247,429.0V422.3h1V429.0zM248,429.0V408.9h1V429.0zM249,429.0V408.9h1V429.0zM250,429.0V415.6h1V429.0zM251,429.0V422.3h1V429.0zM256,429.0V382.1h1V429.0zM257,429.0V382.1h1V429.0zM258,429.0V375.4h1V429.0zM259,429.0V362.0h1V429.0zM260,429.0V362.0h1V429.0zM261,429.0V358.6h1V429.0zM262,429.0V355.3h1V429.0zM263,429.0V355.3h1V429.0zM264,429.0V368.7h1V429.0zM265,429.0V382.1h1V429.0zM266,429.0V395.5h1V429.0zM267,429.0V388.8h1V429.0zM268,429.0V402.2h1V429.0zM269,429.0V408.9h1V429.0zM270,429.0V415.6h1V429.0zM271,429.0V408.9h1V429.0zM272,429.0V415.6h1V429.0zM273,429.0V422.3h1V429.0zM274,429.0V408.9h1V429.0zM275,429.0V415.6h1V429.0zM276,429.0V422.3h1V429.0zM277,429.0V422.3h1V429.0zM278,429.0V388.8h1V429.0zM279,429.0V388.8h1V429.0zM280,429.0V422.3h1V429.0zM281,429.0V402.2h1V429.0zM282,429.0V388.8h1V429.0zM283,429.0V415.6h1V429.0zM284,429.0V422.3h1V429.0zM285,429.0V415.6h1V429.0zM286,429.0V422.3h1V429.0zM287,429.0V415.6h1V429.0zM288,429.0V422.3h1V429.0zM289,429.0V422.3h1V429.0zM290,429.0V422.3h1V429.0zM291,429.0V408.9h1V429.0zM292,429.0V422.3h1V429.0zM293,429.0V422.3h1V429.0zM294,429.0V408.9h1V429.0zM295,429.0V415.6h1V429.0zM296,429.0V422.3h1V429.0zM297,429.0V422.3h1V429.0zM298,429.0V422.3h1V429.0zM299,429.0V422.3h1V429.0zM300,429.0V415.6h1V429.0zM301,429.0V415.6h1V429.0zM302,429.0V422.3h1V429.0zM303,429.0V422.3h1V429.0zM304,429.0V408.9h1V429.0zM305,429.0V415.6h1V429.0zM306,429.0V408.9h1V429.0zM307,429.0V408.9h1V429.0zM308,429.0V388.8h1V429.0zM309,429.0V408.9h1V429.0zM310,429.0V415.6h1V429.0zM311,429.0V422.3h1V429.0zM312,429.0V402.2h1V429.0zM313,429.0V388.8h1V429.0zM314,429.0V408.9h1V429.0zM315,429.0V415.6h1V429.0zM316,429.0V422.3h1V429.0zM317,429.0V415.6h1V429.0zM318,429.0V408.9h1V429.0zM319,429.0V422.3h1V429.0zM320,429.0V408.9h1V429.0zM321,429.0V408.9h1V429.0zM322,429.0V422.3h1V429.0zM323,429.0V422.3h1V429.0zM324,429.0V422.3h1V429.0zM326,429.0V422.3h1V429.0zM327,429.0V408.9h1V429.0zM328,429.0V422.3h1V429.0zM329,429.0V415.6h1V429.0zM330,429.0V415.6h1V429.0zM331,429.0V408.9h1V429.0zM332,429.0V415.6h1V429.0zM333,429.0V402.2h1V429.0zM334,429.0V415.6h1V429.0zM335,429.0V422.3h1V429.0zM336,429.0V415.6h1V429.0zM337,429.0V422.3h1V429.0zM339,429.0V395.5h1V429.0zM341,429.0V415.6h1V429.0zM343,429.0V408.9h1V429.0zM344,429.0V388.8h1V429.0zM345,429.0V395.5h1V429.0zM346,429.0V408.9h1V429.0zM347,429.0V402.2h1V429.0zM348,429.0V408.9h1V429.0zM349,429.0V402.2h1V429.0zM350,429.0V382.1h1V429.0zM351,429.0V415.6h1V429.0zM352,429.0V422.3h1V429.0zM353,429.0V422.3h1V429.0zM355,429.0V422.3h1V429.0zM356,429.0V415.6h1V429.0zM357,429.0V415.6h1V429.0zM359,429.0V422.3h1V429.0zM360,429.0V422.3h1V429.0zM361,429.0V422.3h1V429.0zM362,429.0V408.9h1V429.0zM363,429.0V408.9h1V429.0zM364,429.0V422.3h1V429.0zM366,429.0V388.8h1V429.0zM367,429.0V422.3h1V429.0zM368,429.0V422.3h1V429.0zM369,429.0V388.8h1V429.0zM370,429.0V408.9h1V429.0zM371,429.0V408.9h1V429.0zM372,429.0V422.3h1V429.0zM376,429.0V422.3h1V429.0zM378,429.0V422.3h1V429.0zM379,429.0V422.3h1V429.0zM380,429.0V415.6h1V429.0zM381,429.0V422.3h1V429.0zM382,429.0V402.2h1V429.0zM383,429.0V395.5h1V429.0zM384,429.0V422.3h1V429.0zM385,429.0V402.2h1V429.0zM386,429.0V402.2h1V429.0zM387,429.0V422.3h1V429.0zM388,429.0V402.2h1V429.0zM389,429.0V395.5h1V429.0zM390,429.0V422.3h1V429.0zM392,429.0V422.3h1V429.0zM393,429.0V422.3h1V429.0zM394,429.0V422.3h1V429.0zM395,429.0V422.3h1V429.0zM396,429.0V408.9h1V429.0zM397,429.0V408.9h1V429.0zM398,429.0V415.6h1V429.0zM399,429.0V422.3h1V429.0zM401,429.0V402.2h1V429.0zM403,429.0V422.3h1V429.0zM405,429.0V415.6h1V429.0zM406,429.0V422.3h1V429.0zM407,429.0V375.4h1V429.0zM408,429.0V422.3h1V429.0zM409,429.0V402.2h1V429.0zM412,429.0V422.3h1V429.0zM413,429.0V382.1h1V429.0zM414,429.0V422.3h1V429.0zM415,429.0V388.8h1V429.0zM416,429.0V395.5h1V429.0zM417,429.0V395.5h1V429.0zM418,429.0V422.3h1V429.0zM419,429.0V395.5h1V429.0zM420,429.0V422.3h1V429.0zM421,429.0V422.3h1V429.0zM423,429.0V408.9h1V429.0zM424,429.0V382.1h1V429.0zM425,429.0V382.1h1V429.0zM426,429.0V422.3h1V429.0zM427,429.0V415.6h1V429.0zM428,429.0V422.3h1V429.0zM429,429.0V422.3h1V429.0zM430,429.0V415.6h1V429.0zM431,429.0V422.3h1V429.0zM432,429.0V422.3h1V429.0zM433,429.0V415.6h1V429.0zM434,429.0V415.6h1V429.0zM435,429.0V402.2h1V429.0zM436,429.0V422.3h1V429.0zM438,429.0V422.3h1V429.0zM439,429.0V408.9h1V429.0zM440,429.0V375.4h1V429.0zM443,429.0V422.3h1V429.0zM444,429.0V415.6h1V429.0zM445,429.0V402.2h1V429.0zM446,429.0V415.6h1V429.0zM447,429.0V395.5h1V429.0zM448,429.0V415.6h1V429.0zM449,429.0V375.4h1V429.0zM450,429.0V415.6h1V429.0zM451,429.0V408.9h1V429.0zM452,429.0V408.9h1V429.0zM453,429.0V368.7h1V429.0zM454,429.0V402.2h1V429.0zM455,429.0V362.0h1V429.0zM456,429.0V362.0h1V429.0z" fill="#58ff20"/>
<rect x="255" y="334" width="1" height="95" fill="#ff00ff"/>
<path d="M48,360h1v3h-1zM49,357h1v3h-1zM50,355h1v5h-1zM51,355h1v4h-1zM52,355h1v4h-1zM53,355h1v3h-1zM54,355h1v3h-1zM55,355h1v3h-1zM56,354h1v4h-1zM57,354h1v3h-1zM58,355h1v4h-1zM59,355h1v3h-1zM60,354h1v3h-1zM61,355h1v4h-1zM62,354h1v3h-1zM63,355h1v6h-1zM64,356h1v4h-1zM65,355h1v4h-1zM66,355h1v3h-1zM67,355h1v4h-1zM68,355h1v4h-1zM69,355h1v3h-1zM70,356h1v3h-1zM71,355h1v3h-1zM72,354h1v5h-1zM73,355h1v3h-1zM74,355h1v3h-1zM75,355h1v4h-1zM76,355h1v4h-1zM77,353h1v5h-1zM78,356h1v3h-1zM79,356h1v5h-1zM80,354h1v5h-1zM81,356h1v4h-1zM82,356h1v6h-1zM83,355h1v5h-1zM84,353h1v6h-1zM85,354h1v5h-1zM86,355h1v4h-1zM87,353h1v5h-1zM88,355h1v4h-1zM89,356h1v3h-1zM90,356h1v3h-1zM91,355h1v3h-1zM92,355h1v4h-1zM93,356h1v3h-1zM94,355h1v4h-1zM95,356h1v3h-1zM96,356h1v3h-1zM97,357h1v3h-1zM98,353h1v5h-1zM99,356h1v5h-1zM100,355h1v4h-1zM101,357h1v4h-1zM102,355h1v5h-1zM103,355h1v3h-1zM104,355h1v3h-1zM105,355h1v4h-1zM106,354h1v4h-1zM107,356h1v3h-1zM108,355h1v3h-1zM109,355h1v3h-1zM110,356h1v4h-1zM111,355h1v3h-1zM112,353h1v6h-1zM113,355h1v4h-1zM114,355h1v4h-1zM115,355h1v3h-1zM116,355h1v3h-1zM117,353h1v5h-1zM118,355h1v3h-1zM119,354h1v3h-1zM120,356h1v3h-1zM121,354h1v3h-1zM122,356h1v4h-1zM123,354h1v4h-1zM124,356h1v3h-1zM125,354h1v4h-1zM126,352h1v6h-1zM127,355h1v3h-1zM128,356h1v3h-1zM129,354h1v4h-1zM130,354h1v4h-1zM131,353h1v5h-1zM132,356h1v3h-1zM133,355h1v6h-1zM134,354h1v3h-1zM135,355h1v4h-1zM136,355h1v4h-1zM137,356h1v3h-1zM138,355h1v3h-1zM139,354h1v4h-1zM140,355h1v3h-1zM141,355h1v3h-1zM142,356h1v3h-1zM143,354h1v3h-1zM144,355h1v3h-1zM145,355h1v3h-1zM146,356h1v3h-1zM147,354h1v4h-1zM148,354h1v5h-1zM149,355h1v3h-1zM150,354h1v3h-1zM151,355h1v3h-1zM152,352h1v6h-1zM153,353h1v5h-1zM154,354h1v3h-1zM155,353h1v5h-1zM156,355h1v3h-1zM157,355h1v4h-1zM158,356h1v3h-1zM159,355h1v3h-1zM160,354h1v3h-1zM161,354h1v3h-1zM162,355h1v4h-1zM163,355h1v4h-1zM164,355h1v4h-1zM165,354h1v3h-1zM166,354h1v3h-1zM167,354h1v4h-1zM168,352h1v6h-1zM169,353h1v3h-1zM170,355h1v3h-1zM171,355h1v3h-1zM172,354h1v3h-1zM173,355h1v3h-1zM174,355h1v3h-1zM175,354h1v5h-1zM176,355h1v3h-1zM177,353h1v6h-1zM178,356h1v3h-1zM179,354h1v3h-1zM180,354h1v3h-1zM181,356h1v3h-1zM182,355h1v3h-1zM183,355h1v3h-1zM184,354h1v3h-1zM185,352h1v5h-1zM186,354h1v4h-1zM187,354h1v4h-1zM188,353h1v3h-1zM189,354h1v3h-1zM190,355h1v3h-1zM191,353h1v4h-1zM192,353h1v4h-1zM193,354h1v3h-1zM194,353h1v3h-1zM195,354h1v4h-1zM196,355h1v5h-1zM197,353h1v3h-1zM198,353h1v5h-1zM199,354h1v3h-1zM200,354h1v3h-1zM201,354h1v3h-1zM202,353h1v3h-1zM203,355h1v3h-1zM204,354h1v3h-1zM205,354h1v3h-1zM206,356h1v4h-1zM207,352h1v5h-1zM208,355h1v3h-1zM209,353h1v4h-1zM210,351h1v5h-1zM211,352h1v4h-1zM212,354h1v4h-1zM213,355h1v3h-1zM214,354h1v3h-1zM215,352h1v5h-1zM216,354h1v3h-1zM217,355h1v3h-1zM218,354h1v3h-1zM219,354h1v4h-1zM220,354h1v3h-1zM221,354h1v3h-1zM222,353h1v6h-1zM223,354h1v3h-1zM224,355h1v6h-1zM225,354h1v6h-1zM226,355h1v5h-1zM227,354h1v5h-1zM228,355h1v3h-1zM229,352h1v5h-1zM230,355h1v5h-1zM231,355h1v3h-1zM232,355h1v3h-1zM233,355h1v3h-1zM234,354h1v4h-1zM235,354h1v4h-1zM236,354h1v3h-1zM237,353h1v5h-1zM238,355h1v3h-1zM239,356h1v3h-1zM240,355h1v3h-1zM241,355h1v3h-1zM242,355h1v3h-1zM243,354h1v4h-1zM244,352h1v5h-1zM245,355h1v4h-1zM246,355h1v4h-1zM247,356h1v3h-1zM248,355h1v4h-1zM249,353h1v6h-1zM250,356h1v3h-1zM251,354h1v3h-1zM252,355h1v3h-1zM253,356h1v3h-1zM254,356h1v3h-1zM255,355h1v3h-1zM256,339h1v16h-1zM257,330h1v9h-1zM258,332h1v3h-1zM259,330h1v4h-1zM260,329h1v4h-1zM261,332h1v3h-1zM262,333h1v3h-1zM263,333h1v3h-1zM264,334h1v3h-1zM265,336h1v3h-1zM266,335h1v3h-1zM267,335h1v4h-1zM268,338h1v3h-1zM269,338h1v3h-1zM270,339h1v3h-1zM271,339h1v3h-1zM272,338h1v5h-1zM273,341h1v3h-1zM274,341h1v3h-1zM275,341h1v3h-1zM276,339h1v3h-1zM277,341h1v3h-1zM278,339h1v5h-1zM279,341h1v3h-1zM280,342h1v5h-1zM281,343h1v4h-1zM282,342h1v3h-1zM283,342h1v4h-1zM284,342h1v3h-1zM285,343h1v5h-1zM286,343h1v3h-1zM287,343h1v4h-1zM288,342h1v5h-1zM289,344h1v4h-1zM290,343h1v6h-1zM291,344h1v3h-1zM292,346h1v3h-1zM293,345h1v4h-1zM294,345h1v4h-1zM295,345h1v3h-1zM296,345h1v3h-1zM297,344h1v4h-1zM298,345h1v3h-1zM299,345h1v3h-1zM300,345h1v4h-1zM301,344h1v5h-1zM302,345h1v5h-1zM303,345h1v3h-1zM304,346h1v3h-1zM305,345h1v3h-1zM306,344h1v5h-1zM307,346h1v3h-1zM308,346h1v5h-1zM309,346h1v3h-1zM310,346h1v3h-1zM311,346h1v4h-1zM312,348h1v3h-1zM313,345h1v4h-1zM314,346h1v4h-1zM315,345h1v5h-1zM316,347h1v3h-1zM317,347h1v3h-1zM318,346h1v3h-1zM319,346h1v5h-1zM320,346h1v4h-1zM321,345h1v4h-1zM322,346h1v5h-1zM323,346h1v5h-1zM324,346h1v3h-1zM325,348h1v3h-1zM326,346h1v3h-1zM327,346h1v4h-1zM328,347h1v3h-1zM329,346h1v4h-1zM330,346h1v3h-1zM331,347h1v5h-1zM332,347h1v4h-1zM333,346h1v4h-1zM334,347h1v4h-1zM335,346h1v3h-1zM336,345h1v5h-1zM337,346h1v4h-1zM338,349h1v3h-1zM339,346h1v4h-1zM340,347h1v5h-1zM341,347h1v3h-1zM342,348h1v3h-1zM343,347h1v3h-1zM344,347h1v3h-1zM345,348h1v5h-1zM346,348h1v3h-1zM347,346h1v4h-1zM348,348h1v3h-1zM349,348h1v4h-1zM350,347h1v3h-1zM351,347h1v4h-1zM352,345h1v5h-1zM353,347h1v3h-1zM354,348h1v3h-1zM355,348h1v3h-1zM356,347h1v5h-1zM357,348h1v4h-1zM358,348h1v3h-1zM359,349h1v3h-1zM360,348h1v3h-1zM361,348h1v3h-1zM362,348h1v3h-1zM363,348h1v3h-1zM364,348h1v3h-1zM365,347h1v3h-1zM366,348h1v3h-1zM367,348h1v3h-1zM368,350h1v3h-1zM369,348h1v3h-1zM370,349h1v3h-1zM371,348h1v3h-1zM372,350h1v3h-1zM373,350h1v3h-1zM374,350h1v3h-1zM375,350h1v6h-1zM376,348h1v5h-1zM377,350h1v3h-1zM378,350h1v3h-1zM379,350h1v3h-1zM380,349h1v4h-1zM381,350h1v4h-1zM382,350h1v4h-1zM383,349h1v4h-1zM384,350h1v3h-1zM385,349h1v4h-1zM386,350h1v3h-1zM387,350h1v3h-1zM388,350h1v3h-1zM389,351h1v3h-1zM390,350h1v3h-1zM391,350h1v4h-1zM392,350h1v3h-1zM393,351h1v6h-1zM394,348h1v5h-1zM395,350h1v3h-1zM396,351h1v3h-1zM397,348h1v4h-1zM398,350h1v3h-1zM399,351h1v3h-1zM400,349h1v5h-1zM401,346h1v6h-1zM402,352h1v3h-1zM403,350h1v3h-1zM404,351h1v3h-1zM405,349h1v4h-1zM406,348h1v3h-1zM407,350h1v3h-1zM408,349h1v4h-1zM409,351h1v3h-1zM410,351h1v5h-1zM411,350h1v3h-1zM412,350h1v5h-1zM413,349h1v5h-1zM414,348h1v3h-1zM415,350h1v3h-1zM416,350h1v3h-1zM417,350h1v3h-1zM418,348h1v5h-1zM419,348h1v3h-1zM420,349h1v3h-1zM421,347h1v6h-1zM422,349h1v3h-1zM423,348h1v5h-1zM424,348h1v3h-1zM425,349h1v3h-1zM426,348h1v6h-1zM427,348h1v3h-1zM428,349h1v4h-1zM429,348h1v3h-1zM430,348h1v4h-1zM431,348h1v3h-1zM432,348h1v3h-1zM433,348h1v3h-1zM434,348h1v4h-1zM435,346h1v5h-1zM436,350h1v3h-1zM437,349h1v3h-1zM438,347h1v3h-1zM439,347h1v3h-1zM440,346h1v5h-1zM441,348h1v4h-1zM442,349h1v3h-1zM443,348h1v3h-1zM444,348h1v4h-1zM445,348h1v3h-1zM446,348h1v3h-1zM447,348h1v3h-1zM448,346h1v5h-1zM449,347h1v3h-1zM450,347h1v3h-1zM451,345h1v6h-1zM452,348h1v4h-1zM453,348h1v3h-1zM454,348h1v4h-1zM455,349h1v5h-1z" fill="#ff00ff"/>
<rect x="456" y="293" width="1" height="70" fill="#c8c8c8"/>
</svg>
<!-- right groups -->
<div class="gb" style="left:491px;top:126px;width:137px;height:82px"></div><div class="abs" style="left:498px;top:126px;width:46px;height:2px;background:#d4d0c8"></div>
<div class="gb" style="left:491px;top:217px;width:137px;height:202px"></div><div class="abs" style="left:498px;top:217px;width:43px;height:2px;background:#d4d0c8"></div>
<div class="gb" style="left:491px;top:427px;width:137px;height:24px"></div>
<div class="gb" style="left:491px;top:459px;width:137px;height:54px"></div>
<!-- settings widgets -->
<div class="sunk" style="left:500px;top:242px;width:84px;height:21px"></div>
<div class="btn" style="left:566px;top:244px;width:16px;height:17px"><svg width="7" height="4" viewBox="0 0 7 4" shape-rendering="crispEdges" style="position:absolute;left:3px;top:5px"><path d="M0,0h7l-3.5,4z" fill="#000"/></svg></div>
<div class="btn" style="left:592px;top:240px;width:23px;height:23px"></div>
<svg class="abs" style="left:596px;top:243px" width="14" height="16" viewBox="0 0 14 16" shape-rendering="crispEdges">
<rect x="0.5" y="0.5" width="13" height="15" fill="#fff" stroke="#000"/>
<path d="M3,5h1v1h-1zM3,7h1v1h-1zM4,4h3v1h-3z" fill="#008000"/>
<path d="M6,2L9.200,4.500L6,7z" fill="#008000" shape-rendering="geometricPrecision"/>
<path d="M10,8h1v3h-1zM8,11h3v1h-3z" fill="#008000"/>
<path d="M8.200,9L5,11.500L8.200,14z" fill="#008000" shape-rendering="geometricPrecision"/>
</svg>
<div class="sunk" style="left:554px;top:268px;width:60px;height:20px"></div>
<div class="sunk" style="left:554px;top:291px;width:60px;height:20px"></div>
<div class="cb" style="left:502px;top:316px;background:#fff"></div>
<div class="cb" style="left:502px;top:337px;background:#fff"><svg width="7" height="7" viewBox="0 0 7 7" style="position:absolute;left:1px;top:1px" shape-rendering="crispEdges"><path d="M0,2v3l2,2 5,-5v-3l-5,5z" fill="#000"/></svg></div>
<div class="cb" style="left:502px;top:353px;background:#fff"><svg width="7" height="7" viewBox="0 0 7 7" style="position:absolute;left:1px;top:1px" shape-rendering="crispEdges"><path d="M0,2v3l2,2 5,-5v-3l-5,5z" fill="#000"/></svg></div>
<div class="cb" style="left:502px;top:370px;background:#fff"><svg width="7" height="7" viewBox="0 0 7 7" style="position:absolute;left:1px;top:1px" shape-rendering="crispEdges"><path d="M0,2v3l2,2 5,-5v-3l-5,5z" fill="#000"/></svg></div>
<div class="cb" style="left:502px;top:386px;background:#fff"><svg width="7" height="7" viewBox="0 0 7 7" style="position:absolute;left:1px;top:1px" shape-rendering="crispEdges"><path d="M0,2v3l2,2 5,-5v-3l-5,5z" fill="#000"/></svg></div>
<div class="cb" style="left:502px;top:402px;background:#d4d0c8"><svg width="7" height="7" viewBox="0 0 7 7" style="position:absolute;left:1px;top:1px" shape-rendering="crispEdges"><path d="M0,2v3l2,2 5,-5v-3l-5,5z" fill="#808080"/></svg></div>
<!-- watermark -->
<svg class="abs" style="left:556px;top:462px" width="85" height="62" viewBox="556 462 85 62">
<defs>
<linearGradient id="wd" x1="0" y1="0" x2="1" y2="1"><stop offset="0" stop-color="#b4b2ae"/><stop offset="0.35" stop-color="#e6e5e2"/><stop offset="0.6" stop-color="#dcdad6"/><stop offset="1" stop-color="#c6c4c0"/></linearGradient>
</defs>
<circle cx="595.7" cy="484.2" r="17.6" fill="url(#wd)" stroke="#b8b6b2" stroke-width="0.8"/>
<circle cx="595.7" cy="484.2" r="4.6" fill="#ecebe8" stroke="#c2c0bc" stroke-width="0.8"/>
<circle cx="595.7" cy="484.2" r="1.8" fill="#d4d0c8"/>
<text x="557" y="519.5" font-family="Liberation Sans, sans-serif" font-weight="bold" font-size="15.500" fill="#f2f1ee" opacity="0.62" textLength="86" lengthAdjust="spacingAndGlyphs">CDRLABS.COM</text>
</svg>
<!-- bottom groups -->
<div class="gb" style="left:14px;top:459px;width:144px;height:55px"></div><div class="abs" style="left:21px;top:459px;width:57px;height:2px;background:#d4d0c8"></div>
<div class="gb" style="left:172px;top:459px;width:144px;height:55px"></div><div class="abs" style="left:179px;top:459px;width:66px;height:2px;background:#d4d0c8"></div>
<div class="gb" style="left:331px;top:459px;width:145px;height:40px"></div><div class="abs" style="left:338px;top:459px;width:39px;height:2px;background:#d4d0c8"></div>
<div class="sq" style="left:24px;background:#00ffff"></div>
<div class="sq" style="left:182px;background:#ffff00"></div>
<div class="sq" style="left:341px;background:#ff00ff"></div>
<!-- texts -->
<div id="texts" style="position:absolute;left:0;top:0;width:641px;height:524px;will-change:transform">
<span class="t" style="left:23.70px;top:8.00px;font-size:11.5px;line-height:11.5px;color:#fff;transform:scaleX(1.0000);transform-origin:0 0;font-weight:bold;">Nero CD-DVD Speed 4.51.1</span>
<span class="t" style="left:9.60px;top:27.00px;font-size:11.5px;line-height:11.5px;color:#000;transform:scaleX(0.8310);transform-origin:0 0;">File</span>
<span class="t" style="left:37.70px;top:27.00px;font-size:11.5px;line-height:11.5px;color:#000;transform:scaleX(0.9472);transform-origin:0 0;">Run Test</span>
<span class="t" style="left:92.50px;top:27.00px;font-size:11.5px;line-height:11.5px;color:#000;transform:scaleX(0.9686);transform-origin:0 0;">Extra</span>
<span class="t" style="left:130.50px;top:27.00px;font-size:11.5px;line-height:11.5px;color:#000;transform:scaleX(0.8666);transform-origin:0 0;">Help</span>
<span class="t" style="left:178.70px;top:58.00px;font-size:12px;line-height:12px;color:#000;transform:scaleX(0.8904);transform-origin:0 0;">[1:1]</span>
<span class="t" style="left:208.60px;top:58.00px;font-size:12px;line-height:12px;color:#000;transform:scaleX(0.8925);transform-origin:0 0;">BENQ DVD DD DW1640 BSLB</span>
<span class="t" style="left:497.40px;top:57.00px;font-size:12px;line-height:12px;color:#000;transform:scaleX(0.8602);transform-origin:0 0;">Start</span>
<span class="t" style="left:581.80px;top:57.00px;font-size:12px;line-height:12px;color:#000;transform:scaleX(0.8343);transform-origin:0 0;">Exit</span>
<span class="t" style="left:18.50px;top:99.00px;font-size:12px;line-height:12px;color:#000;transform:scaleX(0.8780);transform-origin:0 0;">Benchmark</span>
<span class="t" style="left:84.40px;top:99.00px;font-size:12px;line-height:12px;color:#000;transform:scaleX(0.8710);transform-origin:0 0;">Create Disc</span>
<span class="t" style="left:151.60px;top:99.00px;font-size:12px;line-height:12px;color:#000;transform:scaleX(0.8846);transform-origin:0 0;">Disc Info</span>
<span class="t" style="left:205.40px;top:97.00px;font-size:12px;line-height:12px;color:#000;transform:scaleX(0.8685);transform-origin:0 0;">Disc Quality</span>
<span class="t" style="left:273.50px;top:99.00px;font-size:12px;line-height:12px;color:#000;transform:scaleX(0.9055);transform-origin:0 0;">ScanDisc</span>
<span class="t" style="left:21.47px;top:126.00px;font-size:12px;line-height:12px;color:#000;transform:scaleX(0.8886);transform-origin:100% 0;">500</span>
<span class="t" style="left:21.47px;top:153.00px;font-size:12px;line-height:12px;color:#000;transform:scaleX(0.8886);transform-origin:100% 0;">400</span>
<span class="t" style="left:21.47px;top:180.00px;font-size:12px;line-height:12px;color:#000;transform:scaleX(0.8886);transform-origin:100% 0;">300</span>
<span class="t" style="left:21.47px;top:206.00px;font-size:12px;line-height:12px;color:#000;transform:scaleX(0.8886);transform-origin:100% 0;">200</span>
<span class="t" style="left:21.47px;top:233.00px;font-size:12px;line-height:12px;color:#000;transform:scaleX(0.8886);transform-origin:100% 0;">100</span>
<span class="t" style="left:28.14px;top:288.00px;font-size:12px;line-height:12px;color:#000;transform:scaleX(0.8608);transform-origin:100% 0;">20</span>
<span class="t" style="left:28.14px;top:315.00px;font-size:12px;line-height:12px;color:#000;transform:scaleX(0.8608);transform-origin:100% 0;">16</span>
<span class="t" style="left:28.14px;top:342.00px;font-size:12px;line-height:12px;color:#000;transform:scaleX(0.8608);transform-origin:100% 0;">12</span>
<span class="t" style="left:34.81px;top:368.00px;font-size:12px;line-height:12px;color:#000;transform:scaleX(0.8224);transform-origin:100% 0;">8</span>
<span class="t" style="left:34.81px;top:395.00px;font-size:12px;line-height:12px;color:#000;transform:scaleX(0.8224);transform-origin:100% 0;">4</span>
<span class="t" style="left:471.20px;top:126.00px;font-size:12px;line-height:12px;color:#000;transform:scaleX(0.8234);transform-origin:0 0;">16</span>
<span class="t" style="left:471.20px;top:143.00px;font-size:12px;line-height:12px;color:#000;transform:scaleX(0.8234);transform-origin:0 0;">14</span>
<span class="t" style="left:471.20px;top:159.00px;font-size:12px;line-height:12px;color:#000;transform:scaleX(0.8234);transform-origin:0 0;">12</span>
<span class="t" style="left:471.20px;top:176.00px;font-size:12px;line-height:12px;color:#000;transform:scaleX(0.8234);transform-origin:0 0;">10</span>
<span class="t" style="left:471.80px;top:193.00px;font-size:12px;line-height:12px;color:#000;transform:scaleX(0.8224);transform-origin:0 0;">8</span>
<span class="t" style="left:471.80px;top:210.00px;font-size:12px;line-height:12px;color:#000;transform:scaleX(0.8224);transform-origin:0 0;">6</span>
<span class="t" style="left:471.80px;top:227.00px;font-size:12px;line-height:12px;color:#000;transform:scaleX(0.8224);transform-origin:0 0;">4</span>
<span class="t" style="left:471.80px;top:243.00px;font-size:12px;line-height:12px;color:#000;transform:scaleX(0.8224);transform-origin:0 0;">2</span>
<span class="t" style="left:471.20px;top:288.00px;font-size:12px;line-height:12px;color:#000;transform:scaleX(0.8608);transform-origin:0 0;">20</span>
<span class="t" style="left:471.20px;top:315.00px;font-size:12px;line-height:12px;color:#000;transform:scaleX(0.8608);transform-origin:0 0;">16</span>
<span class="t" style="left:471.20px;top:342.00px;font-size:12px;line-height:12px;color:#000;transform:scaleX(0.8608);transform-origin:0 0;">12</span>
<span class="t" style="left:471.80px;top:368.00px;font-size:12px;line-height:12px;color:#000;transform:scaleX(0.8224);transform-origin:0 0;">8</span>
<span class="t" style="left:471.80px;top:395.00px;font-size:12px;line-height:12px;color:#000;transform:scaleX(0.8224);transform-origin:0 0;">4</span>
<span class="t" style="left:41.86px;top:270.00px;font-size:12px;line-height:12px;color:#000;transform:scaleX(0.8749);transform-origin:50% 0;">0.0</span>
<span class="t" style="left:41.86px;top:432.00px;font-size:12px;line-height:12px;color:#000;transform:scaleX(0.8749);transform-origin:50% 0;">0.0</span>
<span class="t" style="left:94.06px;top:270.00px;font-size:12px;line-height:12px;color:#000;transform:scaleX(0.8749);transform-origin:50% 0;">1.0</span>
<span class="t" style="left:94.06px;top:432.00px;font-size:12px;line-height:12px;color:#000;transform:scaleX(0.8749);transform-origin:50% 0;">1.0</span>
<span class="t" style="left:146.26px;top:270.00px;font-size:12px;line-height:12px;color:#000;transform:scaleX(0.8749);transform-origin:50% 0;">2.0</span>
<span class="t" style="left:146.26px;top:432.00px;font-size:12px;line-height:12px;color:#000;transform:scaleX(0.8749);transform-origin:50% 0;">2.0</span>
<span class="t" style="left:198.46px;top:270.00px;font-size:12px;line-height:12px;color:#000;transform:scaleX(0.8749);transform-origin:50% 0;">3.0</span>
<span class="t" style="left:198.46px;top:432.00px;font-size:12px;line-height:12px;color:#000;transform:scaleX(0.8749);transform-origin:50% 0;">3.0</span>
<span class="t" style="left:250.66px;top:270.00px;font-size:12px;line-height:12px;color:#000;transform:scaleX(0.8749);transform-origin:50% 0;">4.0</span>
<span class="t" style="left:250.66px;top:432.00px;font-size:12px;line-height:12px;color:#000;transform:scaleX(0.8749);transform-origin:50% 0;">4.0</span>
<span class="t" style="left:302.86px;top:270.00px;font-size:12px;line-height:12px;color:#000;transform:scaleX(0.8749);transform-origin:50% 0;">5.0</span>
<span class="t" style="left:302.86px;top:432.00px;font-size:12px;line-height:12px;color:#000;transform:scaleX(0.8749);transform-origin:50% 0;">5.0</span>
<span class="t" style="left:355.06px;top:270.00px;font-size:12px;line-height:12px;color:#000;transform:scaleX(0.8749);transform-origin:50% 0;">6.0</span>
<span class="t" style="left:355.06px;top:432.00px;font-size:12px;line-height:12px;color:#000;transform:scaleX(0.8749);transform-origin:50% 0;">6.0</span>
<span class="t" style="left:407.26px;top:270.00px;font-size:12px;line-height:12px;color:#000;transform:scaleX(0.8749);transform-origin:50% 0;">7.0</span>
<span class="t" style="left:407.26px;top:432.00px;font-size:12px;line-height:12px;color:#000;transform:scaleX(0.8749);transform-origin:50% 0;">7.0</span>
<span class="t" style="left:459.46px;top:270.00px;font-size:12px;line-height:12px;color:#000;transform:scaleX(0.8749);transform-origin:50% 0;">8.0</span>
<span class="t" style="left:459.46px;top:432.00px;font-size:12px;line-height:12px;color:#000;transform:scaleX(0.8749);transform-origin:50% 0;">8.0</span>
<span class="t" style="left:500.60px;top:122.00px;font-size:12px;line-height:12px;color:#000;transform:scaleX(0.8823);transform-origin:0 0;">Disc info</span>
<span class="t" style="left:500.00px;top:136.00px;font-size:12px;line-height:12px;color:#000;transform:scaleX(0.9026);transform-origin:0 0;">Type:</span>
<span class="t" style="left:499.80px;top:153.00px;font-size:12px;line-height:12px;color:#000;transform:scaleX(0.8473);transform-origin:0 0;">ID:</span>
<span class="t" style="left:500.00px;top:171.00px;font-size:12px;line-height:12px;color:#000;transform:scaleX(0.8715);transform-origin:0 0;">Date:</span>
<span class="t" style="left:500.00px;top:189.00px;font-size:12px;line-height:12px;color:#000;transform:scaleX(0.8501);transform-origin:0 0;">Label:</span>
<span class="t" style="left:545.60px;top:136.00px;font-size:12px;line-height:12px;color:#0a0a86;transform:scaleX(0.8823);transform-origin:0 0;">DVD-R DL</span>
<span class="t" style="left:545.60px;top:153.00px;font-size:12px;line-height:12px;color:#0a0a86;transform:scaleX(0.8997);transform-origin:0 0;">MKM 01RD30</span>
<span class="t" style="left:545.60px;top:171.00px;font-size:12px;line-height:12px;color:#0a0a86;transform:scaleX(0.8865);transform-origin:0 0;">3 May 2006</span>
<span class="t" style="left:545.60px;top:189.00px;font-size:12px;line-height:12px;color:#0a0a86;transform:scaleX(0.9036);transform-origin:0 0;">New</span>
<span class="t" style="left:500.80px;top:213.00px;font-size:12px;line-height:12px;color:#000;transform:scaleX(0.8626);transform-origin:0 0;">Settings</span>
<span class="t" style="left:499.80px;top:227.00px;font-size:12px;line-height:12px;color:#000;transform:scaleX(0.8542);transform-origin:0 0;">Speed:</span>
<span class="t" style="left:504.80px;top:247.00px;font-size:12px;line-height:12px;color:#000;transform:scaleX(0.8659);transform-origin:0 0;">8 X</span>
<span class="t" style="left:502.50px;top:274.00px;font-size:12px;line-height:12px;color:#000;transform:scaleX(0.8366);transform-origin:0 0;">Start:</span>
<span class="t" style="left:502.50px;top:296.00px;font-size:12px;line-height:12px;color:#000;transform:scaleX(0.8506);transform-origin:0 0;">End:</span>
<span class="t" style="left:557.80px;top:272.00px;font-size:12px;line-height:12px;color:#000;transform:scaleX(0.8661);transform-origin:0 0;">0000 MB</span>
<span class="t" style="left:557.80px;top:295.00px;font-size:12px;line-height:12px;color:#000;transform:scaleX(0.8661);transform-origin:0 0;">8000 MB</span>
<span class="t" style="left:520.70px;top:317.00px;font-size:12px;line-height:12px;color:#000;transform:scaleX(0.8962);transform-origin:0 0;">Quick scan</span>
<span class="t" style="left:520.70px;top:338.00px;font-size:12px;line-height:12px;color:#000;transform:scaleX(0.8883);transform-origin:0 0;">Show C1/PIE</span>
<span class="t" style="left:520.70px;top:354.00px;font-size:12px;line-height:12px;color:#000;transform:scaleX(0.8910);transform-origin:0 0;">Show C2/PIF</span>
<span class="t" style="left:520.70px;top:371.00px;font-size:12px;line-height:12px;color:#000;transform:scaleX(0.8638);transform-origin:0 0;">Show jitter</span>
<span class="t" style="left:520.70px;top:387.00px;font-size:12px;line-height:12px;color:#000;transform:scaleX(0.8822);transform-origin:0 0;">Show read speed</span>
<span class="t" style="left:521.70px;top:404.00px;font-size:12px;line-height:12px;color:#fff;transform:scaleX(0.8816);transform-origin:0 0;">Show write speed</span>
<span class="t" style="left:520.70px;top:403.00px;font-size:12px;line-height:12px;color:#808080;transform:scaleX(0.8816);transform-origin:0 0;">Show write speed</span>
<span class="t" style="left:502.50px;top:435.00px;font-size:12px;line-height:12px;color:#000;transform:scaleX(0.8588);transform-origin:0 0;">Quality score:</span>
<span class="t" style="left:606.84px;top:435.00px;font-size:12px;line-height:12px;color:#0a0a86;transform:scaleX(0.8384);transform-origin:100% 0;">94</span>
<span class="t" style="left:502.70px;top:469.00px;font-size:12px;line-height:12px;color:#000;transform:scaleX(0.8372);transform-origin:0 0;">Progress:</span>
<span class="t" style="left:502.70px;top:485.00px;font-size:12px;line-height:12px;color:#000;transform:scaleX(0.8473);transform-origin:0 0;">Position:</span>
<span class="t" style="left:502.70px;top:500.00px;font-size:12px;line-height:12px;color:#000;transform:scaleX(0.8542);transform-origin:0 0;">Speed:</span>
<span class="t" style="left:587.17px;top:469.00px;font-size:12px;line-height:12px;color:#0a0a86;transform:scaleX(0.8375);transform-origin:100% 0;">100 %</span>
<span class="t" style="left:573.17px;top:485.00px;font-size:12px;line-height:12px;color:#0a0a86;transform:scaleX(0.8744);transform-origin:100% 0;">7999 MB</span>
<span class="t" style="left:586.50px;top:500.00px;font-size:12px;line-height:12px;color:#0a0a86;transform:scaleX(0.8789);transform-origin:100% 0;">3.64 X</span>
<span class="t" style="left:35.80px;top:454.00px;font-size:12px;line-height:12px;color:#000;transform:scaleX(0.8280);transform-origin:0 0;">PI Errors</span>
<span class="t" style="left:22.00px;top:470.00px;font-size:12px;line-height:12px;color:#000;transform:scaleX(0.8826);transform-origin:0 0;">Average:</span>
<span class="t" style="left:22.70px;top:485.00px;font-size:12px;line-height:12px;color:#000;transform:scaleX(0.8239);transform-origin:0 0;">Maximum:</span>
<span class="t" style="left:22.70px;top:500.00px;font-size:12px;line-height:12px;color:#000;transform:scaleX(0.8924);transform-origin:0 0;">Total:</span>
<span class="t" style="left:120.37px;top:470.00px;font-size:12px;line-height:12px;color:#0a0a86;transform:scaleX(0.8924);transform-origin:100% 0;">84.06</span>
<span class="t" style="left:130.37px;top:485.00px;font-size:12px;line-height:12px;color:#0a0a86;transform:scaleX(0.8886);transform-origin:100% 0;">338</span>
<span class="t" style="left:103.68px;top:500.00px;font-size:12px;line-height:12px;color:#0a0a86;transform:scaleX(0.8926);transform-origin:100% 0;">2157932</span>
<span class="t" style="left:193.70px;top:454.00px;font-size:12px;line-height:12px;color:#000;transform:scaleX(0.8455);transform-origin:0 0;">PI Failures</span>
<span class="t" style="left:180.60px;top:470.00px;font-size:12px;line-height:12px;color:#000;transform:scaleX(0.8826);transform-origin:0 0;">Average:</span>
<span class="t" style="left:181.30px;top:485.00px;font-size:12px;line-height:12px;color:#000;transform:scaleX(0.8239);transform-origin:0 0;">Maximum:</span>
<span class="t" style="left:181.30px;top:500.00px;font-size:12px;line-height:12px;color:#000;transform:scaleX(0.8924);transform-origin:0 0;">Total:</span>
<span class="t" style="left:286.54px;top:470.00px;font-size:12px;line-height:12px;color:#0a0a86;transform:scaleX(0.9118);transform-origin:100% 0;">0.40</span>
<span class="t" style="left:296.53px;top:485.00px;font-size:12px;line-height:12px;color:#0a0a86;transform:scaleX(0.8822);transform-origin:100% 0;">11</span>
<span class="t" style="left:283.20px;top:500.00px;font-size:12px;line-height:12px;color:#0a0a86;transform:scaleX(0.8950);transform-origin:100% 0;">7567</span>
<span class="t" style="left:352.40px;top:454.00px;font-size:12px;line-height:12px;color:#000;transform:scaleX(0.8456);transform-origin:0 0;">Jitter</span>
<span class="t" style="left:339.80px;top:470.00px;font-size:12px;line-height:12px;color:#000;transform:scaleX(0.8826);transform-origin:0 0;">Average:</span>
<span class="t" style="left:340.50px;top:485.00px;font-size:12px;line-height:12px;color:#000;transform:scaleX(0.8239);transform-origin:0 0;">Maximum:</span>
<span class="t" style="left:340.40px;top:504.00px;font-size:12px;line-height:12px;color:#000;transform:scaleX(0.8389);transform-origin:0 0;">PO failures:</span>
<span class="t" style="left:424.84px;top:470.00px;font-size:12px;line-height:12px;color:#0a0a86;transform:scaleX(0.8597);transform-origin:100% 0;">11.06 %</span>
<span class="t" style="left:430.64px;top:485.00px;font-size:12px;line-height:12px;color:#0a0a86;transform:scaleX(0.8565);transform-origin:100% 0;">14.8 %</span>
<span class="t" style="left:461.31px;top:504.00px;font-size:12px;line-height:12px;color:#0a0a86;transform:scaleX(0.7477);transform-origin:100% 0;">0</span>
</div>
</body></html>
